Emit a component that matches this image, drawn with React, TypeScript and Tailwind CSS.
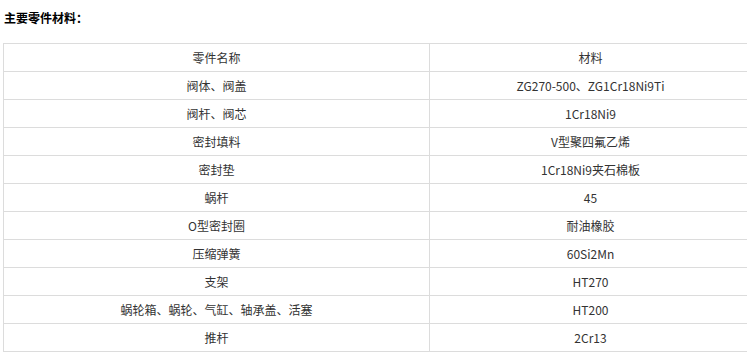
const rows: [string, string][] = [
  ["阀体、阀盖", "ZG270-500、ZG1Cr18Ni9Ti"],
  ["阀杆、阀芯", "1Cr18Ni9"],
  ["密封填料", "V型聚四氟乙烯"],
  ["密封垫", "1Cr18Ni9夹石棉板"],
  ["蜗杆", "45"],
  ["O型密封圈", "耐油橡胶"],
  ["压缩弹簧", "60Si2Mn"],
  ["支架", "HT270"],
  ["蜗轮箱、蜗轮、气缸、轴承盖、活塞", "HT200"],
  ["推杆", "2Cr13"],
];

export default function App() {
  return (
    <div className="h-[352px] w-[747px] overflow-hidden bg-white pl-[3px] font-['Microsoft_YaHei','Noto_Sans_CJK_SC',sans-serif] text-[12px] text-[#333]">
      <p className="pt-[9px] pl-[1px] h-[43px] font-bold leading-[18px] text-black">主要零件材料：</p>

      <table className="w-[748px] table-fixed border-collapse">
        <colgroup>
          <col className="w-[426px]" />
          <col className="w-[322px]" />
        </colgroup>
        <tbody>
          <tr>
            <td className="h-[28px] border border-[#dcdcdc] p-0 text-center leading-[27px]">零件名称</td>
            <td className="h-[28px] border border-[#dcdcdc] p-0 text-center leading-[27px]">材料</td>
          </tr>
          {rows.map(([part, material]) => (
            <tr key={part}>
              <td className="h-[28px] border border-[#dcdcdc] p-0 text-center leading-[27px]">{part}</td>
              <td className="h-[28px] border border-[#dcdcdc] p-0 text-center leading-[27px]">{material}</td>
            </tr>
          ))}
        </tbody>
      </table>
    </div>
  );
}
